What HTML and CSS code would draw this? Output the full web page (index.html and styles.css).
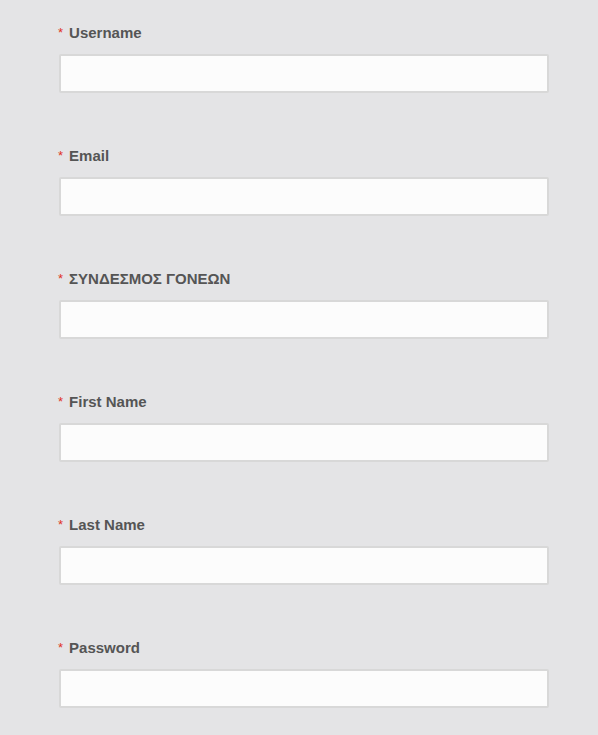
FILE: index.html
```html
<!DOCTYPE html>
<html>
<head>
<meta charset="utf-8">
<link rel="stylesheet" href="styles.css">
</head>
<body>
<form class="form">
  <div class="field">
    <label class="label"><span class="req">*</span>Username</label>
    <input class="input" type="text">
  </div>
  <div class="field">
    <label class="label"><span class="req">*</span>Email</label>
    <input class="input" type="text">
  </div>
  <div class="field">
    <label class="label"><span class="req">*</span>ΣΥΝΔΕΣΜΟΣ ΓΟΝΕΩΝ</label>
    <input class="input" type="text">
  </div>
  <div class="field">
    <label class="label"><span class="req">*</span>First Name</label>
    <input class="input" type="text">
  </div>
  <div class="field">
    <label class="label"><span class="req">*</span>Last Name</label>
    <input class="input" type="text">
  </div>
  <div class="field">
    <label class="label"><span class="req">*</span>Password</label>
    <input class="input" type="password">
  </div>
</form>
</body>
</html>
```
FILE: styles.css
```css
html, body {
  margin: 0;
  padding: 0;
  background: #e4e4e6;
}
body {
  font-family: "Liberation Sans", Arial, sans-serif;
}
.form {
  display: flex;
  flex-direction: column;
  gap: 53px;
  padding: 23px 0 0 59px;
  width: 490px;
}
.field {
  display: flex;
  flex-direction: column;
  gap: 11px;
}
.label {
  display: block;
  height: 20px;
  line-height: 20px;
  font-size: 15px;
  font-weight: bold;
  color: #555555;
}
.req {
  color: #e0321e;
  font-size: 13px;
  font-weight: normal;
  margin-left: -1px;
  margin-right: 6px;
  position: relative;
  top: -1px;
}
.input {
  box-sizing: border-box;
  display: block;
  width: 490px;
  height: 39px;
  margin: 0;
  border: 2px solid #d8d8d8;
  border-radius: 2px;
  background: #fcfcfc;
  outline: none;
  padding: 0 8px;
}
```
